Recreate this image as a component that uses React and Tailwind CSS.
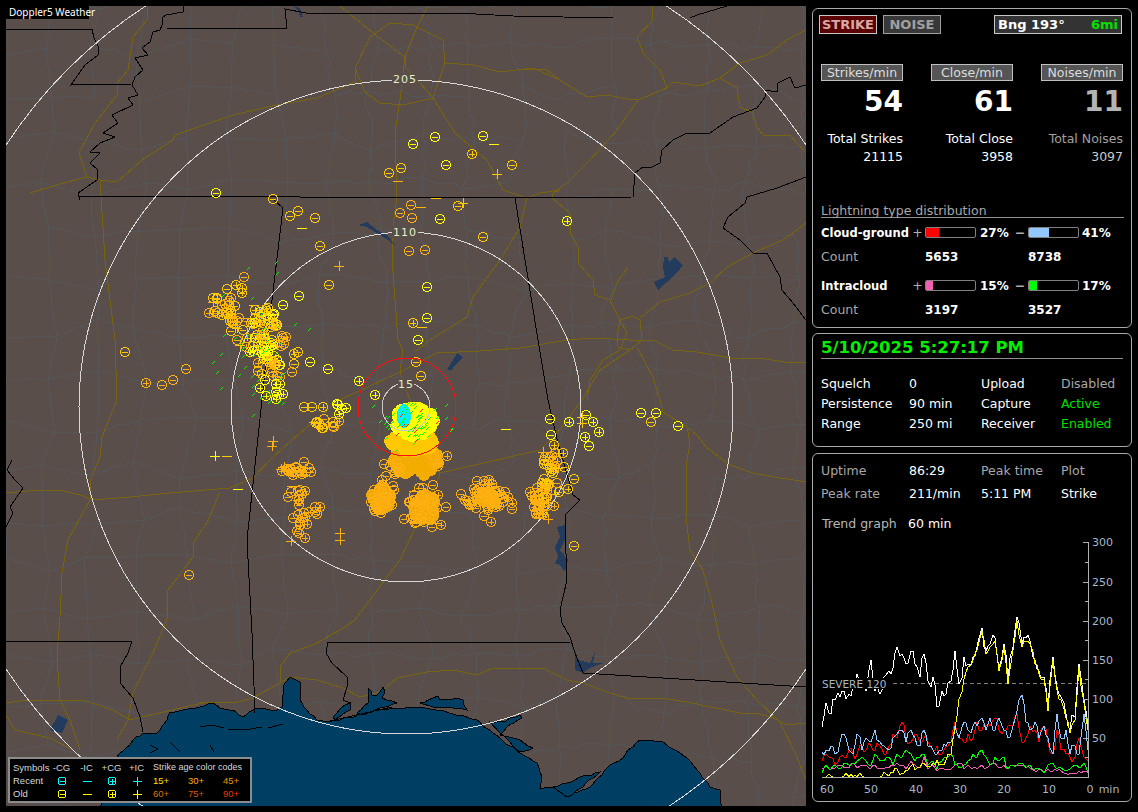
import React from "react";

// seeded random so the scatter stays the same on every load
function makeRng(seed) {
  let s = seed;
  return () => {
    s = (s + 0x6d2b79f5) | 0;
    let t = Math.imul(s ^ (s >>> 15), 1 | s);
    t = (t + Math.imul(t ^ (t >>> 7), 61 | t)) ^ t;
    return ((t ^ (t >>> 14)) >>> 0) / 4294967296;
  };
}
const rnd = makeRng(51025);
const gauss = () => (rnd() + rnd() + rnd() - 1.5) / 0.5;
const line = (pts) => "M" + pts.map((p) => p.join(" ")).join("L");

const WATER = "#003f64";
const LAKE = "#233c5e";
const LAND = "#5a4e4a";
const ROAD = "#786410";

// breaks long edges into small steps so shorelines look hand traced
function rough(pts, step = 4, amp = 1.6) {
  const out = [];
  pts.forEach((a, i) => {
    const b = pts[i + 1];
    out.push(a);
    if (!b) return;
    const n = Math.floor(Math.hypot(b[0] - a[0], b[1] - a[1]) / step);
    for (let k = 1; k < n; k++) {
      out.push([
        Math.round(a[0] + ((b[0] - a[0]) * k) / n + (rnd() - 0.5) * amp),
        Math.round(a[1] + ((b[1] - a[1]) * k) / n + (rnd() - 0.5) * amp),
      ]);
    }
  });
  return out;
}

// county lines, a jittered lattice
function countyMesh() {
  const cell = 47;
  const nodes = {};
  const node = (i, j) => {
    const k = i + "," + j;
    if (!nodes[k]) nodes[k] = [i * cell + (rnd() - 0.5) * 20, j * cell + (rnd() - 0.5) * 20];
    return nodes[k];
  };
  let d = "";
  const edge = (a, b) => {
    const jag = a[0] > 300 ? 7 : 2;
    const pts = [a];
    for (let n = 1; n < 4; n++) {
      const f = n / 4;
      pts.push([a[0] + (b[0] - a[0]) * f + (rnd() - 0.5) * jag, a[1] + (b[1] - a[1]) * f + (rnd() - 0.5) * jag]);
    }
    pts.push(b);
    d += line(pts.map((p) => [Math.round(p[0]), Math.round(p[1])]));
  };
  for (let i = 0; i < 19; i++) {
    for (let j = 0; j < 19; j++) {
      if (rnd() > 0.14) edge(node(i, j), node(i + 1, j));
      if (rnd() > 0.14) edge(node(i, j), node(i, j + 1));
    }
  }
  return d;
}
const COUNTIES = countyMesh();

const GULF = rough([[117,757],[130,745],[133,740],[143,733],[157,733],[167,720],[170,712],[200,707],[213,703],[220,708],[233,710],[243,717],[257,708],[277,710],[282,707],[283,687],[290,677],[300,682],[300,700],[307,710],[317,720],[328,722],[357,715],[367,710],[393,708],[417,707],[440,710],[477,720],[493,733],[520,753],[537,763],[542,777],[540,788],[557,787],[567,797],[590,787],[610,765],[623,758],[628,750],[640,740],[663,742],[687,758],[700,773],[710,787],[720,790],[722,808]]).concat([[100,808]]);
const BAYS = [
  [[368,688],[372,695],[377,695],[383,687],[385,692],[382,698],[397,703],[380,708],[363,715],[357,713],[368,703]],
  [[420,703],[433,698],[438,696],[440,700],[457,698],[463,700],[467,710],[453,708],[433,707]],
  [[333,717],[345,705],[350,703],[350,710],[335,720]],
  [[490,722],[502,722],[520,715],[522,718],[507,727],[500,735],[520,740],[533,748],[520,752],[500,733]],
  [[553,787],[567,783],[580,777],[600,772],[583,787],[567,797]],
].map((b) => rough(b));
const LAKES = [
  [[293,6],[300,8],[303,17],[300,17],[298,10]],
  [[358,225],[367,222],[377,230],[387,235],[395,245],[388,240],[377,233],[367,227]],
  [[447,370],[457,353],[463,357],[455,365],[452,370]],
  [[664,257],[668,257],[669,263],[674,257],[683,265],[677,273],[667,282],[658,290],[654,282],[665,277],[663,267]],
  [[557,527],[565,525],[565,540],[560,550],[568,560],[565,572],[560,565],[555,563],[558,557],[555,547],[560,537]],
  [[575,650],[578,660],[590,663],[595,652],[593,663],[603,663],[590,668],[583,673],[575,670]],
  [[58,715],[68,720],[62,733],[50,730]],
];
const STATE_LINES = [
  [[6,29],[92,29],[94,38],[99,48],[98,55],[85,65],[80,72],[71,85],[132,84]],
  [[183,6],[183,12],[166,15],[163,17],[162,25],[160,30],[153,32],[150,42],[142,48],[148,55],[135,58],[143,70],[135,77],[132,85],[138,95],[128,98],[133,105],[112,115],[118,123],[103,133],[115,137],[100,143],[90,152],[100,153],[90,163],[98,170],[97,180],[78,193],[80,200]],
  [[78,196],[300,197],[515,198],[633,197],[747,197],[777,188],[806,177]],
  [[165,28],[287,29],[285,9],[306,13],[457,13],[513,16],[613,18],[806,18]],
  [[690,18],[697,15],[727,6]],
  [[633,197],[635,173],[643,167],[650,168],[660,163],[662,150],[673,140],[687,133],[710,133],[733,117],[757,108],[765,97],[765,90],[777,92],[778,83],[790,77],[795,88],[806,85]],
  [[747,197],[745,203],[728,217],[723,228],[740,240],[753,253],[767,253],[780,277],[782,290],[793,303],[806,320]],
  [[273,199],[283,208],[272,300],[262,400],[247,540],[252,633],[255,713]],
  [[515,198],[538,340],[548,400],[558,443],[573,495],[580,500],[565,515],[565,527],[567,580],[560,610],[562,623],[570,637],[575,653],[583,673],[806,687]],
  [[328,642],[570,642]],
  [[328,642],[326,653],[332,663],[347,677],[347,687],[343,700],[350,703]],
  [[6,641],[132,641],[128,653],[120,667],[120,683],[133,698],[140,717],[143,732]],
  [[12,460],[7,470],[15,480],[23,488],[10,507],[13,513],[6,527]],
  // sound islands
  [[200,727],[212,725],[224,728]],[[228,729],[245,730],[262,727]],[[268,728],[283,724]],[[210,745],[214,752]],[[330,721],[392,707]],[[150,745],[158,749],[150,753]],[[170,742],[180,752]],
];
const ROADS = [
  [[148,6],[147,20],[133,37],[128,70],[117,83],[117,95],[95,123],[79,153],[87,177],[100,180],[105,260],[115,340],[117,400],[102,437],[100,457],[90,480],[90,500],[68,540],[62,573],[60,617],[57,657],[60,700],[70,720],[80,750]],
  [[30,193],[60,184],[87,177]],
  [[100,180],[117,182],[142,160],[173,140],[175,135],[233,115],[277,105],[317,98],[355,82],[355,68]],
  [[355,68],[370,37],[390,23],[413,25],[443,40],[445,63],[433,98],[403,105],[380,103],[365,92],[355,68]],
  [[340,6],[373,33],[405,57],[405,67],[413,75],[433,98],[455,133],[487,160],[503,190],[527,198],[540,193],[560,190],[553,193],[552,198],[570,213],[570,233],[578,247],[578,263],[593,280],[595,295],[610,300],[620,320],[627,333],[620,350],[603,360],[590,380],[587,400]],
  [[428,6],[417,27],[405,57],[400,100],[395,133],[397,197],[392,233],[393,273],[398,340],[403,350],[400,372],[410,400],[430,440],[440,475],[400,560],[355,620],[340,630],[313,645],[290,653],[280,667],[280,683],[253,698],[233,703],[200,702]],
  [[445,63],[473,65],[500,72],[533,68],[560,80]],
  [[527,198],[520,227],[500,260],[473,297],[467,317],[430,340],[415,352]],
  [[520,69],[547,70],[563,82],[587,97],[607,95],[627,99],[638,100],[667,88],[673,82],[700,86],[720,78],[740,63],[767,55],[790,38],[806,30]],
  [[652,6],[653,20],[637,37],[643,53],[660,70],[667,88]],
  [[638,100],[617,130],[590,160],[567,183],[553,193]],
  [[628,267],[617,283],[610,303]],
  [[720,78],[737,88],[740,107],[753,113],[757,127],[763,135],[790,135],[806,153]],
  [[640,318],[660,302],[690,293],[710,283],[727,267],[753,253],[783,240],[806,223]],
  [[620,320],[633,316],[640,320],[642,340],[630,350],[618,347],[617,337],[620,320]],
  [[630,340],[653,340],[673,350],[697,352],[730,358],[760,358],[790,363],[806,362]],
  [[630,340],[593,338],[567,340],[520,348],[480,351],[437,353],[400,372],[340,400],[300,433],[273,457],[253,478],[230,488],[170,493],[130,497],[93,500],[80,495],[60,490],[40,490],[6,493]],
  [[220,492],[207,523],[193,543],[193,557],[168,590],[167,610],[168,617],[153,653],[133,693],[128,720],[117,740]],
  [[637,347],[653,377],[660,400],[663,412],[687,427],[690,443],[687,460],[686,517],[690,550],[703,570],[712,603],[720,640],[737,677],[757,700],[780,722],[797,757],[807,783]],
  [[687,427],[697,435],[707,448],[730,465],[753,473],[780,478],[807,482]],
  [[630,350],[600,370],[582,400],[557,433],[540,450],[440,473]],
  [[280,683],[290,677],[317,680],[343,688],[360,697],[380,692],[397,678],[427,672],[453,670],[477,675],[493,668],[543,668],[567,680],[583,683],[607,692],[627,698],[660,698],[687,702],[740,713],[757,713],[773,718],[787,725],[806,723]],
  [[6,703],[27,700],[83,700],[113,710],[130,720],[163,712],[207,702]],
  [[6,715],[15,730],[50,738],[73,750]],
];

const Y = "#ffff00";
const G = "#ffc800";
const O = "#ffb010";
const BLOB = "#f0a808";

// strikes read off the map one by one: [type, x, y, colour]
const SINGLES = [
  ["m",413,144,Y],["m",435,137,Y],["m",483,136,Y],["m",512,165,G],["m",446,165,Y],["m",401,168,G],["m",389,173,G],["p",472,154,G],["P",497,174,G],["M",494,144,Y],["M",398,181,O],
  ["m",273,199,G],["m",298,211,G],["m",290,216,G],["m",315,218,G],["M",302,228,Y],["m",411,205,O],["M",421,207,O],["m",400,213,O],["m",412,218,O],["m",440,219,Y],["m",458,206,G],["P",463,203,G],["M",436,198,G],["m",483,237,G],["m",320,246,G],["m",409,251,O],["m",425,250,O],["P",339,266,O],["m",329,285,G],["m",427,287,Y],["m",299,296,Y],["m",427,318,Y],["p",413,323,G],["M",422,327,G],["m",418,340,Y],
  ["m",216,193,Y],["p",567,221,Y],["m",125,352,G],["p",146,383,O],["m",162,385,O],["m",173,380,O],["m",186,369,O],["m",189,575,O],["P",215,456,Y],["M",227,456,G],["M",238,489,Y],["P",273,441,O],["P",272,446,O],["p",359,381,Y],["p",375,395,Y],["M",506,429,Y],
  ["m",641,413,Y],["m",656,413,Y],["m",651,422,G],["m",678,426,Y],["m",574,546,G],
  ["m",550,419,Y],["p",569,422,Y],["m",586,415,Y],["p",593,422,Y],["P",582,417,G],["P",582,423,G],["p",599,432,Y],["p",585,437,Y],["m",589,446,Y],["m",551,435,Y],["p",554,445,G],["p",563,453,G],["P",543,452,O],["m",574,479,G],["p",568,489,G],["m",559,492,G],
  ["m",244,277,O],["p",236,285,G],["m",227,289,G],["m",273,315,Y],["m",283,305,Y],["p",277,325,Y],["m",310,362,Y],["m",328,369,Y],["m",304,407,G],["m",312,407,G],["p",323,407,G],
  ["P",213,302,O],["M",245,318,O],["P",235,327,O],["m",416,362,G],["m",421,376,G],["m",406,385,Y],["m",320,425,G],["M",340,405,Y],["P",548,519,O],["P",340,533,O],["P",340,540,O],
];

function cluster(cx, cy, sx, sy, n, colors, list) {
  for (let i = 0; i < n; i++) {
    const t = rnd() < 0.5 ? "m" : rnd() < 0.85 ? "p" : rnd() < 0.5 ? "P" : "M";
    list.push([t, Math.round(cx + gauss() * sx), Math.round(cy + gauss() * sy), colors[Math.floor(rnd() * colors.length)]]);
  }
  return list;
}

const STRIKES = [...SINGLES];
cluster(226, 310, 10, 9, 26, [O, G], STRIKES);
cluster(248, 330, 12, 9, 12, [O, G], STRIKES);
cluster(262, 318, 8, 8, 22, [Y, G], STRIKES);
cluster(272, 355, 11, 15, 60, [O, G, Y], STRIKES);
cluster(272, 392, 6, 7, 8, [Y], STRIKES);
cluster(322, 422, 7, 3, 12, [O, G], STRIKES);
cluster(345, 408, 5, 3, 5, [Y], STRIKES);
cluster(296, 470, 8, 4, 22, [O], STRIKES);
cluster(296, 495, 6, 5, 10, [O], STRIKES);
cluster(305, 513, 8, 5, 12, [O], STRIKES);
cluster(297, 535, 5, 6, 6, [O], STRIKES);
cluster(382, 498, 7, 8, 30, [O], STRIKES);
cluster(425, 508, 9, 10, 40, [O], STRIKES);
cluster(488, 498, 11, 9, 60, [O], STRIKES);
cluster(552, 465, 5, 8, 18, [O, G], STRIKES);
cluster(543, 490, 6, 10, 30, [O, G], STRIKES);
cluster(538, 508, 5, 6, 14, [O], STRIKES);
cluster(395, 470, 6, 6, 10, [O], STRIKES);
cluster(435, 460, 5, 5, 8, [O], STRIKES);

// solid masses where the strikes pile on top of each other
function blob(cx, cy, rx, ry, n, color) {
  const out = [];
  for (let i = 0; i < n; i++) {
    const a = rnd() * Math.PI * 2;
    const d = Math.sqrt(rnd());
    out.push([Math.round(cx + Math.cos(a) * d * rx), Math.round(cy + Math.sin(a) * d * ry), color]);
  }
  return out;
}
const UNDER_BLOBS = [
  ...blob(382, 498, 10, 11, 40, BLOB),
  ...blob(425, 508, 11, 13, 50, BLOB),
  ...blob(487, 499, 8, 6, 8, BLOB),
  ...blob(416, 460, 23, 16, 110, "#f2ad00"),
];
const OVER_BLOBS = [
  ...blob(412, 442, 22, 10, 80, "#ffc800"),
  ...blob(414, 421, 20, 15, 120, "#ffff00"),
];

// small green and red ticks over the active cells
function ticks(cx, cy, sx, sy, n, color) {
  const out = [];
  for (let i = 0; i < n; i++) {
    const x = Math.round(cx + gauss() * sx);
    const y = Math.round(cy + gauss() * sy);
    out.push([x, y, x + 3, y - 3, color]);
  }
  return out;
}
const TICKS = [
  ...ticks(262, 350, 22, 36, 45, "#00f000"),
  ...ticks(415, 425, 18, 12, 60, "#00ff00"),
  ...ticks(415, 425, 16, 10, 10, "#ff2000"),
];

function Strike({ t, x, y, c, r = 4.5 }) {
  const arm = r + (t === "P" || t === "M" ? 0.5 : -1.5);
  let d = `M${x - arm} ${y}H${x + arm}`;
  if (t === "p" || t === "P") d += `M${x} ${y - arm}V${y + arm}`;
  return (
    <g stroke={c} fill="none">
      {(t === "m" || t === "p") && <circle cx={x} cy={y} r={r} />}
      <path d={d} />
    </g>
  );
}

function RingLabel({ x, y, w, children }) {
  return (
    <g>
      <rect x={x - w / 2} y={y - 6} width={w} height={12} fill={LAND} />
      <text x={x} y={y + 4} textAnchor="middle" fill="#e8f0c8" className="text-[11px] tracking-[1px]">
        {children}
      </text>
    </g>
  );
}

function RadarMap() {
  return (
    <svg viewBox="6 6 800 800" width="800" height="800" shapeRendering="crispEdges" className="block">
      <rect x="6" y="6" width="800" height="800" fill={LAND} />
      <path d={COUNTIES} fill="none" stroke="#54565a" />
      {ROADS.map((r, i) => (
        <path key={i} d={line(r)} fill="none" stroke={ROAD} />
      ))}
      <path d={line(GULF) + "Z"} fill={WATER} stroke="#000" />
      {BAYS.map((b, i) => (
        <path key={i} d={line(b) + "Z"} fill={WATER} stroke="#000" />
      ))}
      {LAKES.map((b, i) => (
        <path key={i} d={line(b) + "Z"} fill={LAKE} />
      ))}
      {STATE_LINES.map((r, i) => (
        <path key={i} d={line(r)} fill="none" stroke="#000" />
      ))}
      {[175, 327, 478].map((r) => (
        <circle key={r} cx="406" cy="407" r={r} fill="none" stroke="#d8d8d8" />
      ))}
      <RingLabel x={405} y={79} w={26}>205</RingLabel>
      <RingLabel x={405} y={232} w={26}>110</RingLabel>

      {UNDER_BLOBS.map((b, i) => (
        <circle key={i} cx={b[0]} cy={b[1]} r="6" fill={b[2]} />
      ))}
      {STRIKES.map((s, i) => (
        <Strike key={i} t={s[0]} x={s[1]} y={s[2]} c={s[3]} />
      ))}
      {OVER_BLOBS.map((b, i) => (
        <circle key={i} cx={b[0]} cy={b[1]} r="6" fill={b[2]} />
      ))}
      <ellipse cx="404" cy="416" rx="7" ry="12" fill="#00f0ff" />
      {TICKS.map((t, i) => (
        <line key={i} x1={t[0]} y1={t[1]} x2={t[2]} y2={t[3]} stroke={t[4]} />
      ))}
      <circle cx="407" cy="407" r="49" fill="none" stroke="#ff1010" />
      <circle cx="406" cy="407" r="24" fill="none" stroke="#c8c8c8" />
      <RingLabel x={406} y={384} w={16}>15</RingLabel>
    </svg>
  );
}

function LegendIcon({ t, c }) {
  return (
    <svg width="12" height="12" viewBox="0 0 12 12" shapeRendering="crispEdges" className="mx-auto block">
      <Strike t={t} x={6} y={6} c={c} r={4} />
    </svg>
  );
}

function Legend() {
  const row = "grid grid-cols-[36px_25px_25px_25px_25px_35px_35px_35px] items-center h-[13px]";
  return (
    <div className="absolute left-[2px] top-[751px] w-[244px] h-[46px] border-2 border-[#8c8c8c] bg-black pl-[3px] pt-[2px] font-['Liberation_Sans',sans-serif] text-[9.5px] leading-[13px] text-[#d4d8dc]">
      <div className={row}>
        <span>Symbols</span>
        <span className="text-center">-CG</span>
        <span className="text-center">-IC</span>
        <span className="text-center">+CG</span>
        <span className="text-center">+IC</span>
        <span className="col-span-3 pl-[4px] text-[9px] whitespace-nowrap">Strike age color codes</span>
      </div>
      <div className={row}>
        <span>Recent</span>
        <LegendIcon t="m" c="#00ffff" />
        <LegendIcon t="M" c="#00ffff" />
        <LegendIcon t="p" c="#00ffff" />
        <LegendIcon t="P" c="#00ffff" />
        <span className="pl-[4px] text-[#ffe000]">15+</span>
        <span className="pl-[4px] text-[#ffb000]">30+</span>
        <span className="pl-[4px] text-[#e89800]">45+</span>
      </div>
      <div className={row}>
        <span>Old</span>
        <LegendIcon t="m" c="#ffff00" />
        <LegendIcon t="M" c="#ffff00" />
        <LegendIcon t="p" c="#ffff00" />
        <LegendIcon t="P" c="#ffff00" />
        <span className="pl-[4px] text-[#d87800]">60+</span>
        <span className="pl-[4px] text-[#d85800]">75+</span>
        <span className="pl-[4px] text-[#e83800]">90+</span>
      </div>
    </div>
  );
}

function Panel({ className, children }) {
  return <div className={"border border-[#a8a8a8] rounded-[6px] bg-black " + className}>{children}</div>;
}

function RateColumn({ label, value, total, totalLabel, dim }) {
  return (
    <div className="w-[82px]">
      <div className="h-[17px] border border-[#c0c0c0] bg-[#555555] text-center leading-[15px] text-[#dddddd]">{label}</div>
      <div className={"mt-[4px] h-[34px] text-right text-[28px] font-bold leading-[34px] " + (dim ? "text-[#b4b4b4]" : "text-white")}>{value}</div>
      <div className={"mt-[11px] flex h-[18px] justify-end leading-[18px] whitespace-nowrap " + (dim ? "text-[#a0a0a0]" : "text-white")}>{totalLabel}</div>
      <div className={"h-[18px] text-right leading-[18px] " + (dim ? "text-[#c8c8c8]" : "text-white")}>{total}</div>
    </div>
  );
}

function Bar({ pct, color }) {
  return (
    <div className="mb-[2px] h-[11px] w-[51px] overflow-hidden rounded-[2px] border border-[#808080]">
      <div className="h-full" style={{ width: pct + "%", background: color }} />
    </div>
  );
}

function TypeRow({ label, a, b }) {
  return (
    <>
      <div className="mt-[6px] flex h-[18px] items-center font-bold leading-[18px] text-white">
        <span className="w-[89px] whitespace-nowrap text-[11.5px]">{label}</span>
        <span className="w-[15px] text-center font-normal text-[#b0b0b0]">+</span>
        <Bar pct={a.pct} color={a.color} />
        <span className="w-[36px] pl-[4px] text-[12px]">{a.pct}%</span>
        <span className="w-[16px] text-center text-[#b0b0b0]">−</span>
        <Bar pct={b.pct} color={b.color} />
        <span className="pl-[3px] text-[12px]">{b.pct}%</span>
      </div>
      <div className="mt-[6px] flex h-[18px] items-center text-[12px] font-bold leading-[18px] text-white">
        <span className="w-[104px] text-[12.5px] font-normal text-[#a8a8a8]">Count</span>
        <span className="w-[103px]">{a.count}</span>
        <span>{b.count}</span>
      </div>
    </>
  );
}

function StatusRow({ cells }) {
  return (
    <div className="grid h-[20px] grid-cols-[88px_72px_80px_auto] items-center leading-[20px]">
      {cells.map((c, i) => (
        <span key={i} className={c[1]}>{c[0]}</span>
      ))}
    </div>
  );
}

// per minute values, oldest first, read off the trend graph
const TREND = {
  white: [64,94,80,98,102,110,106,115,132,123,110,149,110,106,128,136,140,166,157,145,161,145,128,157,123,128,89,110,106,123,161,119,153,145,153,166,191,161,170,178,140,170,123,166,204,170,178,174,149,136,128,89,153,115,102,80,60,77,145,98,64],
  blue: [32,35,40,30,45,55,35,30,55,35,50,45,60,45,40,35,50,55,60,45,60,50,40,60,40,35,30,35,40,45,65,50,70,60,65,65,75,60,75,60,75,60,50,65,85,105,70,60,70,50,65,50,30,80,50,60,30,40,30,80,35],
  red: [20,30,25,15,25,25,35,30,30,40,35,40,35,40,30,40,55,50,70,50,45,55,45,50,45,35,40,30,40,45,70,50,45,55,50,70,60,65,65,75,60,60,65,65,80,45,50,65,60,45,65,45,30,60,35,30,25,25,50,25,20],
  green: [5,15,10,15,10,18,15,18,20,25,20,15,30,20,20,25,15,30,25,35,30,20,25,30,15,20,10,20,25,30,15,12,15,20,30,25,35,25,15,25,20,25,10,15,15,18,12,15,10,12,5,15,18,10,12,8,10,15,12,18,5],
  pink: [10,15,10,12,15,12,12,18,12,15,15,12,15,10,10,12,15,18,15,10,20,15,12,25,10,15,8,12,10,10,15,18,10,15,12,10,15,12,15,18,12,15,10,15,15,15,12,12,8,10,5,10,8,8,8,5,5,5,8,8,8],
};
const yellowTrend = TREND.white.map((v, i) => {
  if (i < 14) return [0, 0, 1, 0, 0, 1, 0, 0, 0, 1, 0, 0, 0, 0][i];
  if (i < 28) return Math.max(0, (i - 14) * 1.3 + (i % 3) * 3);
  if (i === 28) return 22;
  if (i === 29) return 30;
  if (i === 30) return 62;
  if (i === 31) return 100;
  if (i === 32) return 125;
  return v - 4;
});
const chartX = (i) => 822 + (i / 60) * 266;
const chartY = (v) => 777 - v * 0.782;

function series(values, wobble) {
  const pts = [];
  values.forEach((v, i) => {
    pts.push([chartX(i), chartY(v)]);
    if (i < values.length - 1) {
      pts.push([chartX(i + 0.5), chartY(Math.max(0, (v + values[i + 1]) / 2 + (rnd() - 0.5) * wobble))]);
    }
  });
  return line(pts.map((p) => [Math.round(p[0]), Math.round(p[1])]));
}
const PLOTS = [
  { d: series(TREND.pink, 5), c: "#f060b0" },
  { d: series(TREND.green, 6), c: "#00ff00" },
  { d: series(TREND.red, 14), c: "#ff0000" },
  { d: series(TREND.blue, 14), c: "#90c8ff" },
  { d: series(TREND.white, 22), c: "#ffffff" },
  { d: series(yellowTrend, 10), c: "#ffff00" },
];

function TrendChart() {
  const axis = "#b0b0b0";
  const label = "#a8b8c8";
  const steps = [0, 25, 50, 75, 100, 125, 150, 175, 200, 225, 250, 275, 300];
  return (
    <svg viewBox="813 533 318 268" width="318" height="268" shapeRendering="crispEdges" className="block text-[11px]">
      <path d="M893 683.5H1088" stroke="#808080" strokeDasharray="4 3" />
      {PLOTS.map((p, i) => (
        <path key={i} d={p.d} fill="none" stroke={p.c} />
      ))}
      <path d="M822 777H1088V542" fill="none" stroke={axis} />
      {steps.map((v) => (
        <path key={v} d={`M${v % 50 ? 1085 : 1083} ${Math.round(chartY(v))}H1088`} stroke={axis} />
      ))}
      {[300, 250, 200, 150, 100, 50].map((v) => (
        <text key={v} x="1092" y={chartY(v) + 4} fill={label}>{v}</text>
      ))}
      <rect x="821" y="678" width="71" height="11" fill="#000" />
      <text x="822" y="688" fill={label} className="text-[10.5px]">SEVERE 120</text>
      {[[60, 827], [50, 871], [40, 916], [30, 960], [20, 1004], [10, 1049], [0, 1090]].map(([m, x]) => (
        <text key={m} x={x} y="793" textAnchor="middle" fill={label}>{m}</text>
      ))}
      <text x="1109" y="793" textAnchor="middle" fill={label}>min</text>
    </svg>
  );
}

export default function App() {
  return (
    <div className="flex h-[812px] w-[1138px] overflow-hidden bg-black pl-[6px] pt-[6px] font-['DejaVu_Sans',sans-serif] text-[12.5px] text-white">
      <div className="relative h-[800px] w-[800px] overflow-hidden">
        <RadarMap />
        <div className="absolute left-0 top-0 h-[13px] w-[83px] whitespace-nowrap bg-black pl-[3px] font-['Noto_Sans',sans-serif] text-[10px] leading-[13px] text-white">Doppler5 Weather</div>
        <Legend />
      </div>

      <div className="ml-[6px] mt-[2px] flex w-[320px] flex-col">
        <Panel className="h-[320px] pl-[8px] pt-[6px]">
          <div className="-ml-[2px] flex h-[19px] items-stretch text-[13px] font-bold">
            <div className="w-[58px] border border-[#c8c8c8] bg-[#5a0000] text-center leading-[17px] text-[#d8a8a8]">STRIKE</div>
            <div className="ml-[6px] w-[58px] border border-[#a0a0a0] bg-[#383838] text-center leading-[17px] text-[#a0a0a0]">NOISE</div>
            <div className="ml-[53px] flex w-[128px] justify-between border border-[#c8c8c8] bg-[#333333] px-[3px] leading-[17px]">
              <span>Bng 193°</span>
              <span className="text-[#00e000]">6mi</span>
            </div>
          </div>
          <div className="mt-[30px] flex gap-x-[28px]">
            <RateColumn label="Strikes/min" value="54" totalLabel="Total Strikes" total="21115" />
            <RateColumn label="Close/min" value="61" totalLabel="Total Close" total="3958" />
            <RateColumn label="Noises/min" value="11" totalLabel="Total Noises" total="3097" dim />
          </div>
          <div className="mt-[36px] h-[16px] w-[303px] border-b border-[#909090] leading-[17px] text-[#a8a8a8]">Lightning type distribution</div>
          <TypeRow label="Cloud-ground" a={{ pct: 27, color: "#ff0000", count: 5653 }} b={{ pct: 41, color: "#90c8ff", count: 8738 }} />
          <div className="h-[5px]" />
          <TypeRow label="Intracloud" a={{ pct: 15, color: "#f060b0", count: 3197 }} b={{ pct: 17, color: "#00ff00", count: 3527 }} />
        </Panel>

        <Panel className="mt-[5px] h-[114px] px-[8px] pt-[2px]">
          <div className="h-[23px] w-[302px] border-b border-[#909090] text-[16.5px] font-bold leading-[24px] text-[#00f000]">5/10/2025 5:27:17 PM</div>
          <div className="mt-[15px]">
            <StatusRow cells={[["Squelch"], ["0"], ["Upload"], ["Disabled", "text-[#a8a8a8]"]]} />
            <StatusRow cells={[["Persistence"], ["90 min"], ["Capture"], ["Active", "text-[#00e000]"]]} />
            <StatusRow cells={[["Range"], ["250 mi"], ["Receiver"], ["Enabled", "text-[#00e000]"]]} />
          </div>
        </Panel>

        <Panel className="mt-[6px] h-[349px] pt-[7px]">
          <div className="px-[8px]">
            <StatusRow cells={[["Uptime", "text-[#a8a8a8]"], ["86:29"], ["Peak time", "text-[#a8a8a8]"], ["Plot", "text-[#a8a8a8]"]]} />
            <div className="mt-[3px]">
              <StatusRow cells={[["Peak rate", "text-[#a8a8a8]"], ["211/min"], ["5:11 PM"], ["Strike"]]} />
            </div>
            <div className="mt-[10px] flex h-[19px] items-center pl-[1px] leading-[20px]">
              <span className="w-[86px] text-[#b8b8b8]">Trend graph</span>
              <span>60 min</span>
            </div>
          </div>
          <TrendChart />
        </Panel>
      </div>
    </div>
  );
}
